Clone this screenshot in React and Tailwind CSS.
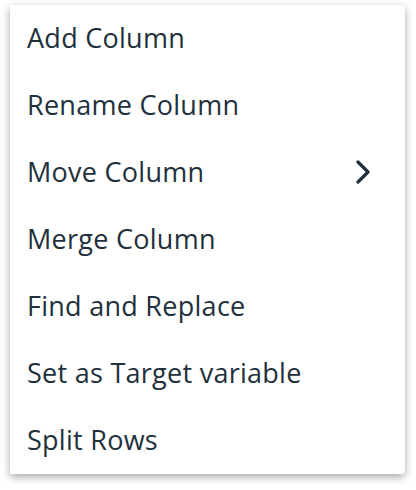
import React from "react";

const items = [
  "Add Column",
  "Rename Column",
  "Move Column",
  "Merge Column",
  "Find and Replace",
  "Set as Target variable",
  "Split Rows",
];

export default function App() {
  return (
    <div className="w-[416px] h-[490px] bg-white pt-[5px] pl-[10px]">
      <div className="w-[395px] bg-white rounded-r-[4px] rounded-bl-[2px] shadow-[0_3px_8px_rgba(0,0,0,0.35)] font-['Open_Sans',sans-serif] text-[#22303c]">
        {items.map((label) => (
          <div key={label} className="h-[67px] flex items-center justify-between pl-[17px] pr-[34px] pb-[1px] text-[27px] tracking-[0.01em]">
            <span>{label}</span>
            {label === "Move Column" && (
              <svg width="16" height="24" viewBox="0 0 16 24" fill="none">
                <path d="M3 2l10 10-10 10" stroke="#22303c" strokeWidth="3.2" strokeLinecap="round" strokeLinejoin="round" />
              </svg>
            )}
          </div>
        ))}
      </div>
    </div>
  );
}
